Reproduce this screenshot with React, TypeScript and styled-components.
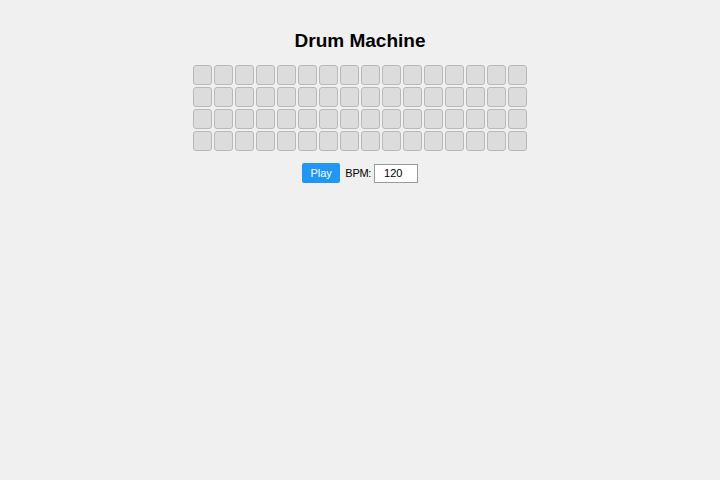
import React, { useState } from "react";
import styled, { createGlobalStyle } from "styled-components";

const GlobalStyle = createGlobalStyle`
  html, body {
    margin: 0;
    padding: 0;
    background: #f0f0f0;
    font-family: "Liberation Sans", Arial, sans-serif;
  }
`;

const Page = styled.div`
  display: flex;
  flex-direction: column;
  align-items: center;
  padding-top: 30px;
`;

const Title = styled.h1`
  margin: 0 0 13px;
  font-size: 19px;
  line-height: 22px;
  font-weight: bold;
  color: #000;
`;

const Grid = styled.div`
  display: grid;
  grid-template-columns: repeat(16, 19px);
  grid-auto-rows: 20px;
  gap: 2px;
`;

const Cell = styled.button<{ $on: boolean }>`
  width: 19px;
  height: 20px;
  padding: 0;
  box-sizing: border-box;
  border: 1px solid #b8b8b8;
  border-radius: 3px;
  background: ${(p) => (p.$on ? "#2196f3" : "#dcdcdc")};
  cursor: pointer;
`;

const Controls = styled.div`
  display: flex;
  align-items: center;
  margin-top: 12px;
`;

const PlayButton = styled.button`
  height: 20px;
  padding: 0 8.5px;
  border: none;
  border-radius: 2px;
  background: #2196f3;
  color: #fff;
  font-family: "Liberation Sans", Arial, sans-serif;
  font-size: 11px;
  cursor: pointer;
`;

const Label = styled.label`
  margin-left: 5px;
  font-size: 11px;
  letter-spacing: -0.3px;
  color: #000;
`;

const BpmInput = styled.input`
  margin-left: 3px;
  width: 44px;
  height: 19px;
  box-sizing: border-box;
  padding: 0 0 0 9px;
  border: 1px solid #999;
  background: #fff;
  font-family: "Liberation Sans", Arial, sans-serif;
  font-size: 11px;
  color: #000;
  outline: none;
`;

export default function App() {
  const [pattern, setPattern] = useState<boolean[][]>(
    Array.from({ length: 4 }, () => Array(16).fill(false))
  );
  const [bpm, setBpm] = useState("120");

  const toggle = (r: number, c: number) =>
    setPattern((p) =>
      p.map((row, ri) => (ri === r ? row.map((v, ci) => (ci === c ? !v : v)) : row))
    );

  return (
    <>
      <GlobalStyle />
      <Page>
        <Title>Drum Machine</Title>
        <Grid>
          {pattern.map((row, r) =>
            row.map((on, c) => (
              <Cell key={`${r}-${c}`} $on={on} onClick={() => toggle(r, c)} />
            ))
          )}
        </Grid>
        <Controls>
          <PlayButton>Play</PlayButton>
          <Label htmlFor="bpm">BPM:</Label>
          <BpmInput id="bpm" value={bpm} onChange={(e) => setBpm(e.target.value)} />
        </Controls>
      </Page>
    </>
  );
}
